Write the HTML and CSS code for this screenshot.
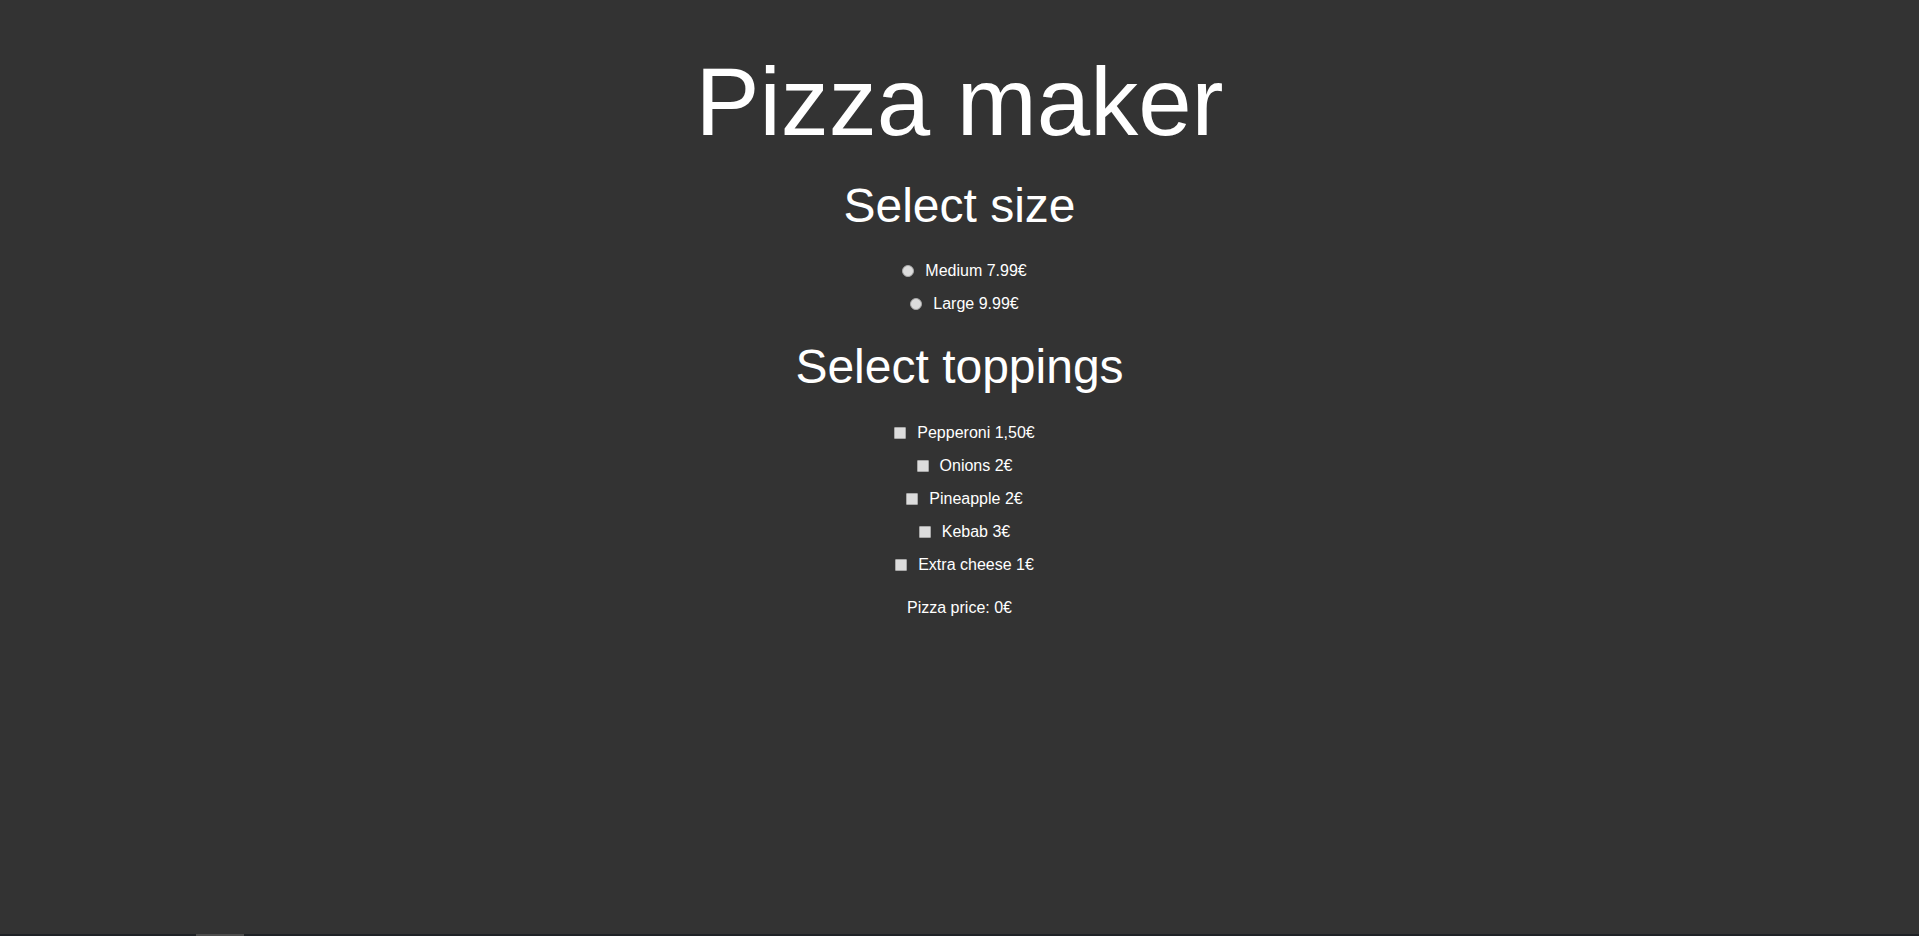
FILE: index.html
```html
<!DOCTYPE html>
<html lang="en">
<head>
<meta charset="utf-8">
<title>Pizza maker</title>
<link rel="stylesheet" href="styles.css">
</head>
<body>
  <h1 class="title">Pizza maker</h1>

  <h2 class="section-title first">Select size</h2>
  <div class="options">
    <label class="option"><input class="radio" type="radio" name="size" value="medium"><span>Medium 7.99€</span></label>
    <label class="option"><input class="radio" type="radio" name="size" value="large"><span>Large 9.99€</span></label>
  </div>

  <h2 class="section-title">Select toppings</h2>
  <div class="options">
    <label class="option"><input class="check" type="checkbox" value="pepperoni"><span>Pepperoni 1,50€</span></label>
    <label class="option"><input class="check" type="checkbox" value="onions"><span>Onions 2€</span></label>
    <label class="option"><input class="check" type="checkbox" value="pineapple"><span>Pineapple 2€</span></label>
    <label class="option"><input class="check" type="checkbox" value="kebab"><span>Kebab 3€</span></label>
    <label class="option"><input class="check" type="checkbox" value="cheese"><span>Extra cheese 1€</span></label>
  </div>

  <p class="price">Pizza price: 0€</p>

  <div class="scrollbar"><div class="scrollbar-thumb"></div></div>
</body>
</html>
```

FILE: styles.css
```css
html, body {
  margin: 0;
  padding: 0;
}

body {
  background: #333333;
  color: #ffffff;
  font-family: "Liberation Sans", Arial, sans-serif;
  text-align: center;
  min-height: 936px;
}

.title {
  font-size: 96px;
  font-weight: normal;
  line-height: normal;
  margin: 47px 0 0;
}

.section-title {
  font-size: 48px;
  font-weight: normal;
  line-height: normal;
  margin: 26.1px 0 0;
}

.section-title.first {
  margin-top: 20.7px;
}

.options {
  display: flex;
  flex-direction: column;
  align-items: center;
  gap: 15px;
  margin-top: 29.4px;
}

.option {
  display: flex;
  align-items: center;
  font-size: 16px;
  line-height: normal;
}

.radio,
.check {
  -webkit-appearance: none;
  appearance: none;
  box-sizing: border-box;
  width: 12px;
  height: 12px;
  margin: 0 11px 0 10px;
  background: #dcdcdc;
  border: 1px solid #a8a8a8;
}

.radio {
  border-radius: 50%;
}

.check {
  border-radius: 1px;
}

.price {
  font-size: 16px;
  line-height: normal;
  margin: 25.5px 0 0;
}

.scrollbar {
  position: fixed;
  left: 0;
  right: 0;
  bottom: 0;
  height: 2px;
  background: #1f2226;
}

.scrollbar-thumb {
  margin-left: 196px;
  width: 48px;
  height: 2px;
  background: #4d4d4d;
}
```
